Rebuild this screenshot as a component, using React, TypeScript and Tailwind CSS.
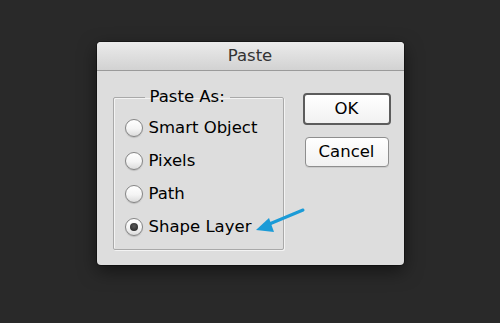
import React from "react";

const OPTIONS = [
  { label: "Smart Object", checked: false },
  { label: "Pixels", checked: false },
  { label: "Path", checked: false },
  { label: "Shape Layer", checked: true },
];

function Radio({ checked }: { checked: boolean }) {
  return (
    <span className="flex h-[18px] w-[18px] shrink-0 items-center justify-center rounded-full border border-[#858585] bg-[linear-gradient(180deg,#ffffff_0%,#f4f4f4_55%,#dcdcdc_100%)] shadow-[0_1px_1px_rgba(0,0,0,0.15)]">
      {checked && (
        <span className="h-[8px] w-[8px] rounded-full bg-[radial-gradient(circle_at_50%_40%,#5a5a5a,#1e1e1e)]" />
      )}
    </span>
  );
}

export default function App() {
  return (
    <div
      className="flex h-[323px] w-[500px] justify-center bg-[#292929] pt-[42px]"
      style={{ fontFamily: '"DejaVu Sans", "Liberation Sans", sans-serif' }}
    >
      <div className="relative flex h-[223px] w-[307px] flex-col overflow-hidden rounded-[4px] bg-[#dddddd] shadow-[0_0_0_1px_rgba(0,0,0,0.35),0_6px_18px_rgba(0,0,0,0.5)]">
        {/* Title bar */}
        <div className="flex h-[29px] shrink-0 items-center justify-center border-b border-[#9a9a9a] bg-[linear-gradient(180deg,#ebebeb_0%,#d2d2d2_100%)] text-[16.5px] text-[#333]">
          Paste
        </div>

        {/* Body */}
        <div className="flex flex-1 pl-[16px] pr-[13px] pt-[17px]">
          <fieldset className="h-[162px] w-[171px] rounded-[2px] border border-[#a9a9a9] pl-[11px] pr-2 shadow-[inset_1px_1px_0_#f3f3f3,1px_1px_0_#f3f3f3]">
            <legend className="ml-[20px] px-[5px] text-[16.5px] leading-[18px] text-black">
              Paste As:
            </legend>
            <div className="mt-[13px] flex flex-col gap-[15px]">
              {OPTIONS.map((o) => (
                <div key={o.label} className="flex h-[18px] items-center gap-[6px] text-[16.5px] text-black">
                  <Radio checked={o.checked} />
                  <span>{o.label}</span>
                </div>
              ))}
            </div>
          </fieldset>

          <div className="ml-auto flex flex-col items-center pt-[5px]">
            <button className="flex h-[32px] w-[88px] items-center justify-center rounded-[4px] border-2 border-[#5c5c5c] bg-[linear-gradient(180deg,#ffffff_0%,#f1f1f1_100%)] text-[16.5px] text-black">
              OK
            </button>
            <button className="mt-[12px] flex h-[30px] w-[84px] items-center justify-center rounded-[4px] border border-[#8e8e8e] bg-[linear-gradient(180deg,#ffffff_0%,#f1f1f1_100%)] text-[16.5px] text-black shadow-[0_1px_0_rgba(0,0,0,0.08)]">
              Cancel
            </button>
          </div>
        </div>

        {/* Annotation arrow */}
        <svg className="absolute left-0 top-0" width="307" height="223" viewBox="0 0 307 223">
          <line x1="206" y1="168" x2="170" y2="183" stroke="#1b9bd7" strokeWidth="3" strokeLinecap="round" />
          <polygon points="159,188 172,176 177,190" fill="#1b9bd7" />
        </svg>
      </div>
    </div>
  );
}
